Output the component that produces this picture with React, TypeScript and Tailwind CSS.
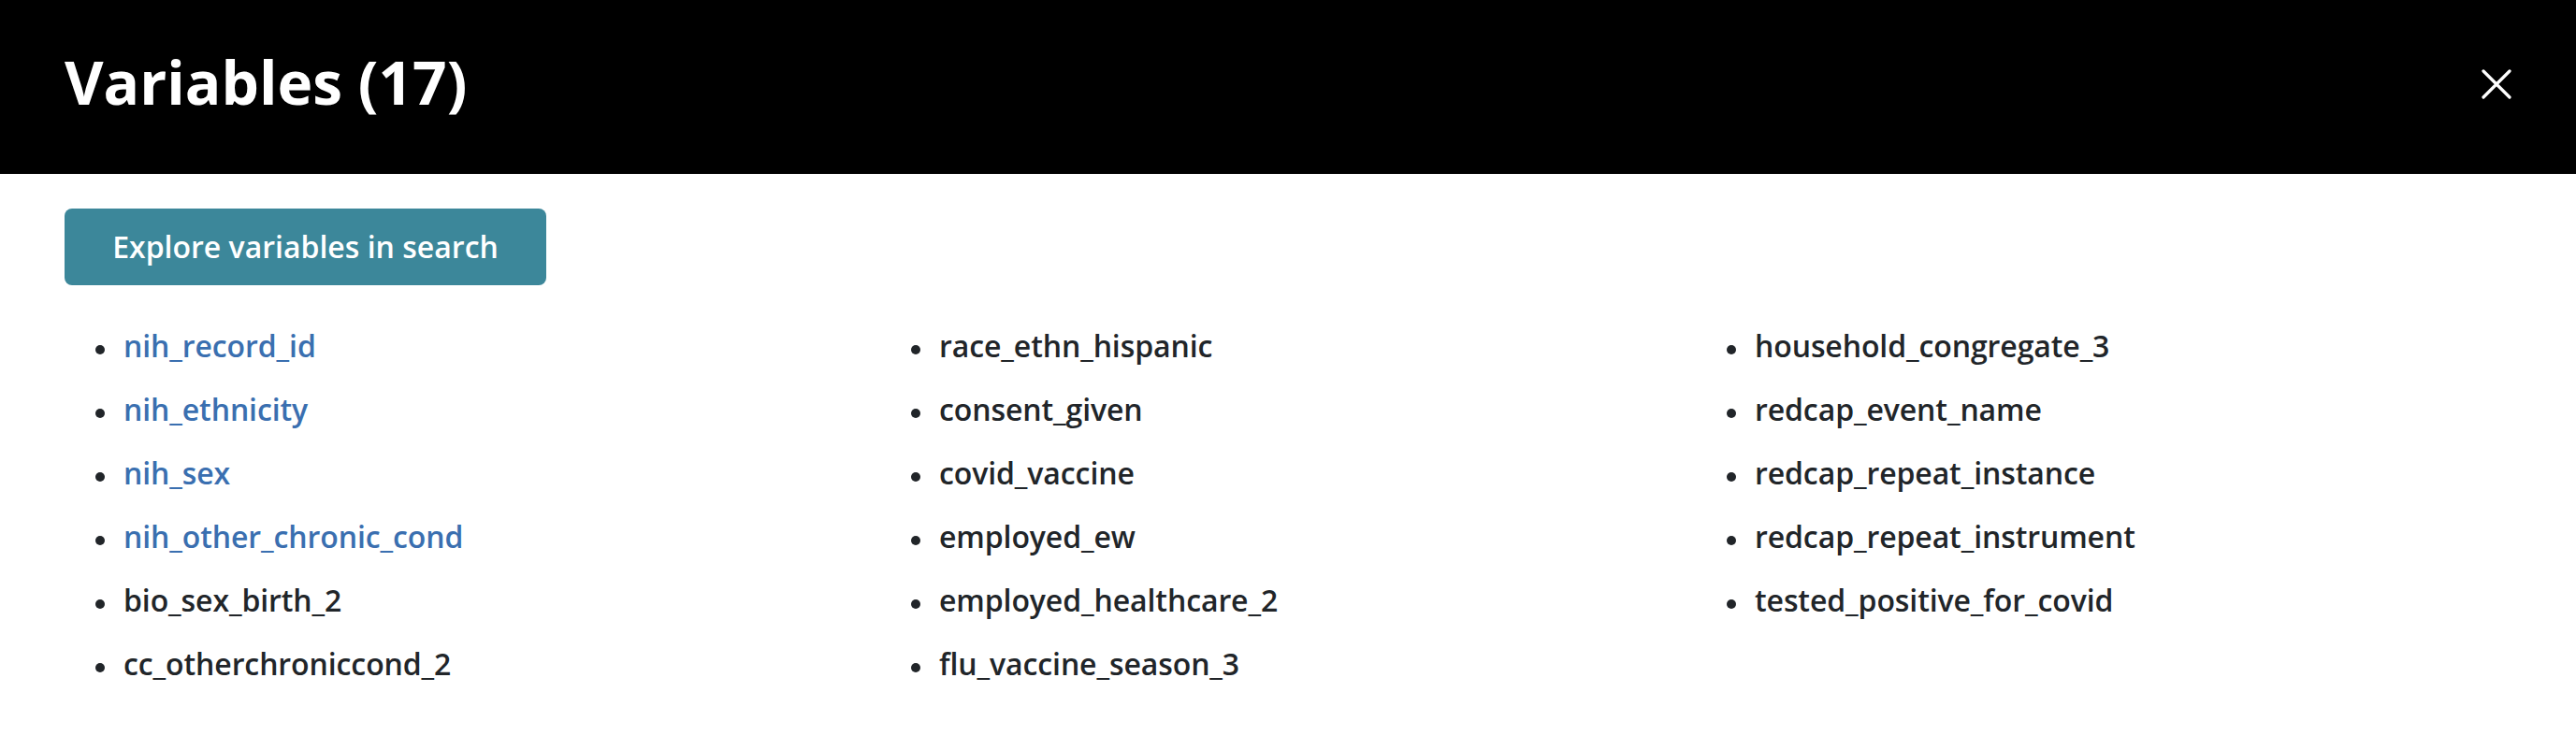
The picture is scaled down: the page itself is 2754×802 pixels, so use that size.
import React from "react";

const cols: { name: string; link?: boolean }[][] = [
  [
    { name: "nih_record_id", link: true },
    { name: "nih_ethnicity", link: true },
    { name: "nih_sex", link: true },
    { name: "nih_other_chronic_cond", link: true },
    { name: "bio_sex_birth_2" },
    { name: "cc_otherchroniccond_2" },
  ],
  [
    { name: "race_ethn_hispanic" },
    { name: "consent_given" },
    { name: "covid_vaccine" },
    { name: "employed_ew" },
    { name: "employed_healthcare_2" },
    { name: "flu_vaccine_season_3" },
  ],
  [
    { name: "household_congregate_3" },
    { name: "redcap_event_name" },
    { name: "redcap_repeat_instance" },
    { name: "redcap_repeat_instrument" },
    { name: "tested_positive_for_covid" },
  ],
];

export default function App() {
  return (
    <div className="w-[2754px] h-[802px] bg-white font-['Open_Sans',sans-serif]">
      <header className="h-[186px] bg-black flex items-center justify-between px-[69px] pb-[10px]">
        <h1 className="text-[64px] font-bold text-white leading-none">Variables (17)</h1>
        <button className="w-[32px] h-[32px] mt-[4px] text-white" aria-label="Close">
          <svg viewBox="0 0 32 32" width="32" height="32" fill="none" stroke="currentColor" strokeWidth="3.2" strokeLinecap="round">
            <path d="M2 2 L30 30 M30 2 L2 30" />
          </svg>
        </button>
      </header>
      <div className="px-[69px] pt-[37px]">
        <button className="h-[82px] w-[515px] rounded-[8px] bg-[#3c879a] text-white text-[32px] font-semibold flex items-center justify-center">
          Explore variables in search
        </button>
        <div className="grid grid-cols-3 mt-[31px]">
          {cols.map((col, i) => (
            <ul key={i} className="flex flex-col">
              {col.map((it) => (
                <li key={it.name} className="flex items-center h-[68px] pl-[33px] gap-[20px]">
                  <span className="w-[10px] h-[10px] rounded-full bg-[#212529] translate-y-[4px] shrink-0" />
                  <span
                    className={
                      "text-[32px] font-semibold leading-[68px] tracking-[-0.1px] " +
                      (it.link ? "text-[#3a6fb0]" : "text-[#212529]")
                    }
                  >
                    {it.name}
                  </span>
                </li>
              ))}
            </ul>
          ))}
        </div>
      </div>
    </div>
  );
}
